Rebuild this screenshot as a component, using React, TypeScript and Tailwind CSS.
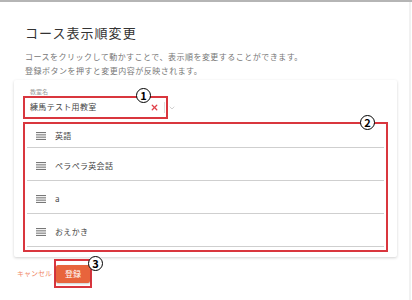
import React from "react";
import { ChevronDown, X } from "lucide-react";

const courses = ["英語", "ペラペラ英会話", "a", "おえかき"];

const Marker: React.FC<{ n: string; className: string }> = ({ n, className }) => (
  <span
    className={`absolute flex h-[15px] w-[15px] items-center justify-center rounded-full border border-black bg-white text-[11px] font-bold leading-none text-black ${className}`}
  >
    {n}
  </span>
);

const DragIcon = () => (
  <svg width="10" height="8" viewBox="0 0 10 8" className="shrink-0">
    <rect x="0" y="0" width="10" height="1.1" fill="#777" />
    <rect x="0" y="2.3" width="10" height="1.1" fill="#777" />
    <rect x="0" y="4.6" width="10" height="1.1" fill="#777" />
    <rect x="0" y="6.9" width="10" height="1.1" fill="#777" />
  </svg>
);

export default function App() {
  return (
    <div
      className="relative h-[300px] w-[412px] overflow-hidden border-t-2 border-[#b5b5b5] bg-white"
      style={{ fontFamily: '"Noto Sans CJK JP", "Noto Sans", sans-serif' }}
    >
      <div className="flex h-full border-r-2 border-[#f1f1f1] w-[411px]">
        <div className="flex flex-1 flex-col px-[14px]">
          {/* Title */}
          <h1 className="pl-[11px] pt-[22px] text-[13px] leading-[18px] tracking-[0.08em] text-[#333]">
            コース表示順変更
          </h1>
          <div className="mt-[8px] pl-[11px] text-[8px] leading-[14px] tracking-[0.06em] text-[#777]">
            <p>コースをクリックして動かすことで、表示順を変更することができます。</p>
            <p>登録ボタンを押すと変更内容が反映されます。</p>
          </div>

          {/* Card */}
          <div className="mt-[2px] w-[383px] rounded-[2px] bg-white px-[9px] pb-[5px] pt-[8px] shadow-[0_1px_3px_rgba(0,0,0,0.18)]">
            <div className="pl-[7px] text-[6px] leading-[8px] text-[#999]">教室名</div>
            <div className="relative flex h-[23px] items-center">
              <div className="ml-[6px] flex h-full w-[134px] items-center border-b border-[#999] pl-[1px]">
                <span className="flex-1 text-[8px] tracking-[0.04em] text-[#444]">練馬テスト用教室</span>
                <X size={9} strokeWidth={3.5} className="mr-[4px] text-[#e0404a]" />
              </div>
              <div className="ml-[1px] h-[11px] w-px bg-[#ddd]" />
              <ChevronDown size={8} className="ml-[3px] text-[#bbb]" />
              <div className="pointer-events-none absolute left-0 top-0 h-[23px] w-[145px] border-2 border-[#d9363e]" />
              <Marker n="1" className="left-[113px] -top-[8px]" />
            </div>

            {/* Course list */}
            <div className="relative mt-[3px] border-2 border-[#d9363e] px-[2px] pb-[3px]">
              {courses.map((c, i) => (
                <div
                  key={c}
                  className={`flex items-center gap-[9px] border-b border-[#cfcfcf] pl-[9px] ${
                    i === 0 ? "h-[24px]" : "h-[33px] pt-[4px]"
                  }`}
                >
                  <DragIcon />
                  <span className="text-[8px] tracking-[0.04em] text-[#444]">{c}</span>
                </div>
              ))}
              <Marker n="2" className="right-[11px] -top-[9px]" />
            </div>
          </div>

          {/* Actions */}
          <div className="mt-[2px] flex items-center">
            <button className="ml-[3px] text-[7px] text-[#f08a6a]">キャンセル</button>
            <div className="relative ml-[2px] flex h-[29px] w-[38px] items-center justify-center border-2 border-[#d9363e]">
              <span className="flex h-[18px] w-[34px] items-center justify-center rounded-[2px] bg-[#e8643c] text-[8px] text-white shadow-[0_1px_2px_rgba(0,0,0,0.2)]">
                登録
              </span>
              <Marker n="3" className="-right-[13px] -top-[5px]" />
            </div>
          </div>
        </div>
      </div>
    </div>
  );
}
